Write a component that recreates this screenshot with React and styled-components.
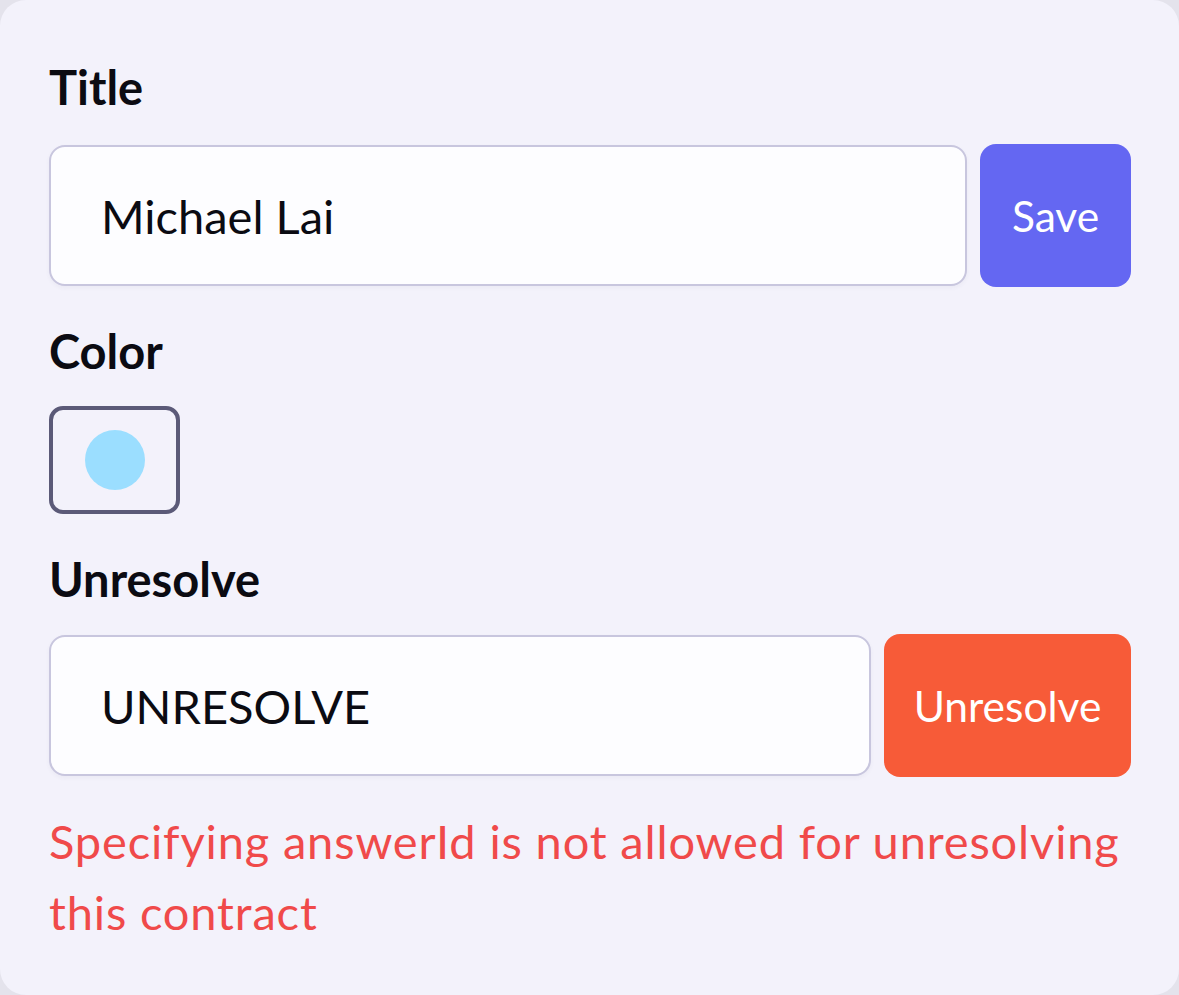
import React from 'react';
import styled, { createGlobalStyle } from 'styled-components';

const GlobalStyle = createGlobalStyle`
  html, body {
    margin: 0;
    padding: 0;
    background: #e4e3ec;
  }
  body {
    font-family: Lato, "Noto Sans", sans-serif;
  }
`

const Panel = styled.div`
  box-sizing: border-box;
  width: 1179px;
  height: 995px;
  background: #f3f2fb;
  border-radius: 26px;
  padding: 63px 48px 0 49px;
  display: flex;
  flex-direction: column;
`
const Label = styled.div`
  font-size: 47px;
  line-height: 48px;
  font-weight: 700;
  color: #0b0b12;
  margin-top: ${p => p.$top || 0}px;
  margin-bottom: ${p => p.$bottom ?? 33}px;
`
const Row = styled.div`
  display: flex;
  gap: 13px;
  height: 143px;
`
const Field = styled.div`
  box-sizing: border-box;
  flex: 1;
  height: 141px;
  margin-top: 1px;
  background: #fdfdff;
  border: 2.5px solid #c8c6de;
  border-radius: 16px;
  padding-left: 50px;
  display: flex;
  align-items: center;
  font-size: 47px;
  color: #0b0b12;
  box-shadow: 0 2px 4px rgba(80, 80, 120, 0.05);
`
const Button = styled.button`
  box-sizing: border-box;
  width: ${p => p.$w}px;
  height: 143px;
  border: none;
  border-radius: 16px;
  background: ${p => p.$bg};
  color: #ffffff;
  font-family: inherit;
  font-size: 42.5px;
  padding: 0;
  display: flex;
  align-items: center;
  justify-content: center;
`
const Swatch = styled.div`
  box-sizing: border-box;
  width: 131px;
  height: 108px;
  border: 4.5px solid #5b5a78;
  border-radius: 14px;
  display: flex;
  align-items: center;
  justify-content: center;
`
const Dot = styled.div`
  width: 60px;
  height: 60px;
  border-radius: 50%;
  background: ${p => p.$color};
`
const ErrorText = styled.div`
  margin-top: 29px;
  font-size: 47px;
  line-height: 71px;
  letter-spacing: 0.85px;
  color: #f04a4a;
`

export default function App() {
  return (
    <>
      <GlobalStyle />
      <Panel>
        <Label>Title</Label>
        <Row>
          <Field>Michael Lai</Field>
          <Button $w={151} $bg="#6467f2">Save</Button>
        </Row>
        <Label $top={40} $bottom={31}>Color</Label>
        <Swatch>
          <Dot $color="#9bdeff" />
        </Swatch>
        <Label $top={41} $bottom={31}>Unresolve</Label>
        <Row>
          <Field>UNRESOLVE</Field>
          <Button $w={247} $bg="#f75b38">Unresolve</Button>
        </Row>
        <ErrorText>Specifying answerId is not allowed for unresolving this contract</ErrorText>
      </Panel>
    </>
  );
}
